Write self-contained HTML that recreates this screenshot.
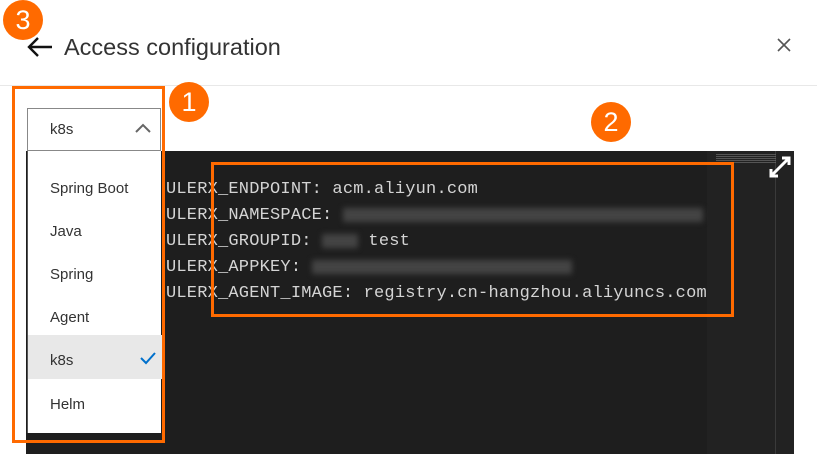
<!DOCTYPE html>
<html><head><style>
*{margin:0;padding:0;box-sizing:border-box}
body{width:817px;height:454px;overflow:hidden;background:#fff;font-family:"Liberation Sans",sans-serif;position:relative}
.a{position:absolute}
.circ{position:absolute;width:40px;height:40px;border-radius:50%;background:#ff6a00;color:#fff;font-size:27px;text-align:center;line-height:40px}
.code{position:absolute;left:166px;font-family:"Liberation Mono",monospace;font-size:17px;color:#d4d4d4;white-space:pre;letter-spacing:0.2px}
.blur{display:inline-block;height:14px;background:#444;filter:blur(3px);vertical-align:middle}
.mi{position:absolute;left:22px;font-size:15px;color:#333}
</style></head><body>
<div class="a" style="left:0;top:85px;width:817px;height:1px;background:#e8e8e8"></div>
<svg class="a" style="left:26px;top:36px" width="28" height="22" viewBox="0 0 28 22"><path d="M26 11H3M12 2L3 11l9 9" stroke="#111" stroke-width="2.4" fill="none"/></svg>
<div class="a" style="left:64px;top:34px;font-size:23.5px;color:#333">Access configuration</div>
<svg class="a" style="left:777px;top:38px" width="14" height="14"><path d="M1 1L13 13M13 1L1 13" stroke="#555" stroke-width="1.6"/></svg>

<div class="a" style="left:26px;top:151px;width:768px;height:303px;background:#1e1e1e"></div>
<div class="a" style="left:707px;top:151px;width:87px;height:303px;background:#222"></div>
<div class="a" style="left:775px;top:151px;width:1px;height:303px;background:#3a3a3a"></div>
<div class="a" style="left:716px;top:154px;width:60px;height:10px;background:repeating-linear-gradient(#777 0 1px,transparent 1px 2px);opacity:.6"></div>
<svg class="a" style="left:767px;top:154px" width="26" height="26" viewBox="0 0 26 26"><path d="M4 22L22 4M15 4h7v7M4 15v7h7" stroke="#fff" stroke-width="3" fill="none"/></svg>

<div class="code" style="top:180px">ULERX_ENDPOINT: acm.aliyun.com</div>
<div class="code" style="top:206px">ULERX_NAMESPACE: <span class="blur" style="width:360px"></span></div>
<div class="code" style="top:232px">ULERX_GROUPID: <span class="blur" style="width:36px"></span> test</div>
<div class="code" style="top:258px">ULERX_APPKEY: <span class="blur" style="width:260px"></span></div>
<div class="code" style="top:284px">ULERX_AGENT_IMAGE: registry.cn-hangzhou.aliyuncs.com</div>

<div class="a" style="left:27px;top:108px;width:134px;height:43px;border:1px solid #888;background:#fff"></div>
<div class="a" style="left:50px;top:121px;font-size:15px;color:#333">k8s</div>
<svg class="a" style="left:134px;top:122px" width="18" height="12"><path d="M2 10L9 3l7 7" stroke="#666" stroke-width="2" fill="none"/></svg>

<div class="a" style="left:27px;top:151px;width:134px;height:282px;background:#fff;border-left:1px solid #555">
<div class="mi" style="top:29px">Spring Boot</div>
<div class="mi" style="top:72px">Java</div>
<div class="mi" style="top:115px">Spring</div>
<div class="mi" style="top:158px">Agent</div>
<div class="a" style="left:0;top:184px;width:134px;height:44px;background:#e8e8e8"></div>
<div class="mi" style="top:201px">k8s</div>
<svg class="a" style="left:112px;top:200px" width="16" height="14"><path d="M1 7l5 5 9-10" stroke="#0070cc" stroke-width="2" fill="none"/></svg>
<div class="mi" style="top:245px">Helm</div>
</div>

<div class="a" style="left:12px;top:86px;width:153px;height:357px;border:3px solid #ff6a00"></div>
<div class="a" style="left:211px;top:162px;width:523px;height:155px;border:3px solid #ff6a00"></div>
<div class="circ" style="left:169px;top:82px">1</div>
<div class="circ" style="left:591px;top:102px">2</div>
<div class="circ" style="left:3px;top:0px">3</div>
</body></html>
